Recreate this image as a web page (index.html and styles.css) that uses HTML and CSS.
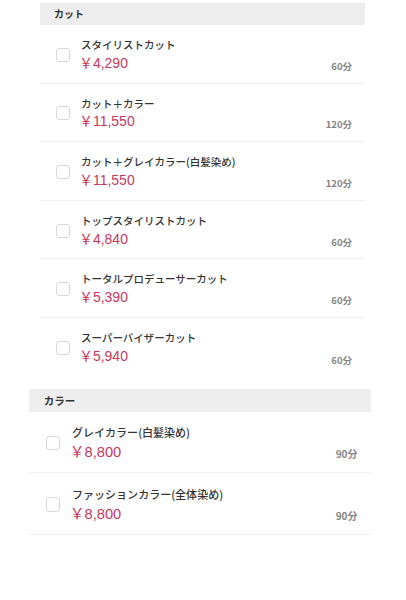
FILE: index.html
```
<html>
<head>
  <meta charset="utf-8">
  <title>メニュー選択</title>
  <meta name="viewport" content="width=device-width, initial-scale=1.0">
  <link rel="stylesheet" href="styles.css">
</head>
<body>
  <section class="menu menu-cut">
    <h2 class="menu-head">カット</h2>
    <ul class="menu-list">
      <li class="menu-item">
        <span class="check"></span>
        <div class="menu-info">
          <p class="menu-name">スタイリストカット</p>
          <p class="menu-price">￥4,290</p>
        </div>
        <span class="menu-time">60分</span>
      </li>
      <li class="menu-item">
        <span class="check"></span>
        <div class="menu-info">
          <p class="menu-name">カット＋カラー</p>
          <p class="menu-price">￥11,550</p>
        </div>
        <span class="menu-time">120分</span>
      </li>
      <li class="menu-item">
        <span class="check"></span>
        <div class="menu-info">
          <p class="menu-name">カット＋グレイカラー(白髪染め)</p>
          <p class="menu-price">￥11,550</p>
        </div>
        <span class="menu-time">120分</span>
      </li>
      <li class="menu-item">
        <span class="check"></span>
        <div class="menu-info">
          <p class="menu-name">トップスタイリストカット</p>
          <p class="menu-price">￥4,840</p>
        </div>
        <span class="menu-time">60分</span>
      </li>
      <li class="menu-item">
        <span class="check"></span>
        <div class="menu-info">
          <p class="menu-name">トータルプロデューサーカット</p>
          <p class="menu-price">￥5,390</p>
        </div>
        <span class="menu-time">60分</span>
      </li>
      <li class="menu-item">
        <span class="check"></span>
        <div class="menu-info">
          <p class="menu-name">スーパーバイザーカット</p>
          <p class="menu-price">￥5,940</p>
        </div>
        <span class="menu-time">60分</span>
      </li>
    </ul>
  </section>

  <section class="menu menu-color">
    <h2 class="menu-head">カラー</h2>
    <ul class="menu-list">
      <li class="menu-item">
        <span class="check"></span>
        <div class="menu-info">
          <p class="menu-name">グレイカラー(白髪染め)</p>
          <p class="menu-price">￥8,800</p>
        </div>
        <span class="menu-time">90分</span>
      </li>
      <li class="menu-item">
        <span class="check"></span>
        <div class="menu-info">
          <p class="menu-name">ファッションカラー(全体染め)</p>
          <p class="menu-price">￥8,800</p>
        </div>
        <span class="menu-time">90分</span>
      </li>
    </ul>
  </section>
</body>
</html>
```

FILE: styles.css
```
body {
  margin: 0;
  background-color: #ffffff;
  font-family: 'Noto Sans CJK JP', 'Noto Sans', sans-serif;
  color: #333333;
}
.menu {
  font-size: 10px;
}
.menu-cut {
  margin: 3px 41px 0 40px;
}
.menu-color {
  font-size: 10.5px;
  margin: 12px 35px 0 29px;
}
.menu-head {
  margin: 0;
  height: 2.2em;
  line-height: 2.2em;
  padding-left: 1.4em;
  background-color: #eeeeee;
  font-size: 1em;
  font-weight: bold;
  color: #333333;
}
.menu-list {
  list-style: none;
  margin: 0;
  padding: 0;
}
.menu-item {
  display: flex;
  align-items: center;
  box-sizing: border-box;
  height: 5.86em;
  padding: 0 1.3em 0 1.6em;
  border-bottom: 1px solid #f1f1f1;
}
.menu-cut .menu-item:last-child {
  border-bottom: none;
}
.check {
  flex: none;
  box-sizing: border-box;
  width: 1.4em;
  height: 1.4em;
  margin-top: 0.2em;
  border: 1px solid #d8d8d8;
  border-radius: 0.3em;
  background: #ffffff;
}
.menu-info {
  flex: 1;
  margin-left: 1.1em;
  align-self: flex-start;
  padding-top: 1.2em;
}
.menu-info p {
  margin: 0;
}
.menu-name {
  font-size: 1.05em;
  line-height: 1.5;
  font-weight: 500;
  color: #333333;
}
.menu-price {
  margin: 0.15em 0 0 -0.15em !important;
  font-family: 'Liberation Sans', 'Noto Sans CJK JP', sans-serif;
  font-size: 1.4em;
  line-height: 1.25;
  color: #c8385c;
}
.menu-time {
  align-self: flex-end;
  margin-bottom: 1.1em;
  font-size: 0.95em;
  line-height: 1.3;
  font-weight: bold;
  color: #858585;
}
```
